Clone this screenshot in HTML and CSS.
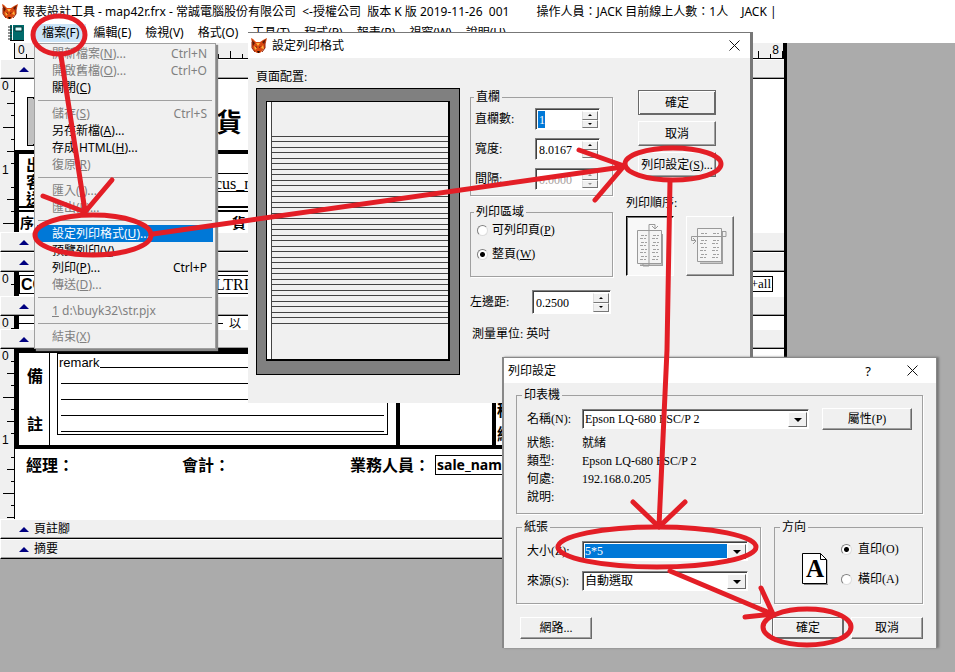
FILE: index.html
```html
<!DOCTYPE html>
<html lang="zh-Hant">
<head>
<meta charset="utf-8">
<title>報表設計工具</title>
<link rel="stylesheet" href="styles.css">
</head>
<body>
<svg class="defs" aria-hidden="true">
  <symbol id="fox" viewBox="0 0 16 16">
    <path d="M0 0l2 1 3 3h4l3-2 4-2-1 4-1 2 0 4-3 3-2 2H6l-3-2-2-4 0-4z" fill="#d9480f"/>
    <path d="M1 2l3 3-2 3zM15 1l-4 3 2 2z" fill="#5c1a08"/>
    <path d="M5 5h4l-2 3zM3 8l3 2-2 2zM12 7l-2 3 3 1z" fill="#ffb340"/>
    <path d="M4 8l2 1v1zM10 8l-2 1v1zM6 13h3l-1 2H7z" fill="#2b0d05"/>
    <path d="M1 4v6l3 4M14 4v6l-3 4" fill="none" stroke="#8d2108"/>
  </symbol>
  <symbol id="sheet" viewBox="0 0 26 36">
    <path d="M3 35.500h22.500V4" fill="none" stroke="#a0a0a0" stroke-width="2"/>
    <path d="M.5.500h24v33H.5z" fill="#f4f4f4" stroke="#999"/>
    <path d="M4 5.500h6M4 12.500h6M4 19.500h6M4 26.500h6M16 5.500h6M16 12.500h6M16 19.500h6M16 26.500h6M3 8.500h6M3 15.500h6M3 22.500h6M3 29.500h6M15 8.500h6M15 15.500h6M15 22.500h6M15 29.500h6" stroke="#a0a0a0" stroke-dasharray="3 1"/>
  </symbol>
</svg>

<header class="app-head">
  <div class="app-title">
    <svg class="fox"><use href="#fox"/></svg>
    <span>報表設計工具 - map42r.frx - 常誠電腦股份有限公司&nbsp; &lt;-授權公司&nbsp; 版本 K 版 2019-11-26&nbsp; 001</span>
    <span class="operator">操作人員：JACK 目前線上人數：1人</span>
    <span class="user">JACK |</span>
  </div>
  <nav class="menubar">
    <svg class="book" viewBox="0 0 16 16"><path d="M2 0h14v15H2z" fill="#006b6b"/><path d="M4 0h1v15H4z" fill="#fff"/><path d="M7 2h7v4H7z" fill="#dff" stroke="#033"/><path d="M0 2h4M0 5h4M0 8h4M0 11h4M0 14h4" stroke="#222"/><path d="M2 15.500h14" stroke="#000"/></svg>
    <button class="open">檔案(F)</button><button>編輯(E)</button><button>檢視(V)</button><button>格式(O)</button><button>工具(T)</button><button>程式(P)</button><button>報表(R)</button><button>視窗(W)</button><button>說明(H)</button>
  </nav>
</header>

<main class="designer">
  <div class="ruler-top"><span>0</span><span>8</span></div>
  <div class="band"><i></i></div>
  <section class="strip">
    <div class="ruler"><b>0</b><b>1</b></div>
    <div class="canvas tall">
      <div class="picture"></div>
      <span class="ink headline">貨</span>
      <div class="frame head-frame"></div>
      <span class="ink t-out">出</span><span class="ink t-cust">客</span><span class="ink t-send">送</span>
      <div class="rule r1"></div><span class="ink serif t-cus">cus_n</span><div class="rule r2"></div><div class="rule r3"></div><div class="rule r4"></div>
      <span class="ink small t-seq">序</span><span class="ink small t-goods">貨</span>
    </div>
  </section>
  <div class="band"><i></i></div>
  <div class="band"><i></i></div>
  <section class="strip">
    <div class="ruler"><b>0</b></div>
    <div class="canvas detail">
      <div class="frame side-frame"></div>
      <span class="field t-co">CO</span><span class="field serif t-ltri">LTRI</span><span class="field serif t-all">+all</span>
    </div>
  </section>
  <div class="band"><i></i></div>
  <section class="strip">
    <div class="ruler"><b>0</b></div>
    <div class="canvas thin">
      <div class="frame side-frame"></div><div class="rule r5"></div><span class="ink below">以</span>
    </div>
  </section>
  <div class="band"><i></i></div>
  <section class="strip">
    <div class="ruler"><b>0</b><b>1</b></div>
    <div class="canvas foot">
      <div class="frame foot-frame"></div>
      <span class="ink t-bei">備</span><span class="ink t-zhu">註</span>
      <div class="remark"><span>remark</span><hr><hr><hr><hr><hr></div>
      <div class="post p0"></div><div class="post p1"></div><div class="post p2"></div>
      <span class="ink t-tax">稅</span><span class="ink t-total">總</span>
      <span class="ink sign s1">經理：</span><span class="ink sign s2">會計：</span><span class="ink sign s3">業務人員：</span>
      <span class="field sale">sale_name</span>
    </div>
  </section>
  <div class="band"><i></i>頁註腳</div>
  <div class="band"><i></i>摘要</div>
</main>

<div class="menu" role="menu">
  <button disabled><span>開新檔案(<u>N</u>)...</span><span>Ctrl+N</span></button>
  <button disabled><span>開啟舊檔(<u>O</u>)...</span><span>Ctrl+O</span></button>
  <button><span>關閉(<u>C</u>)</span></button>
  <hr>
  <button disabled><span>儲存(<u>S</u>)</span><span>Ctrl+S</span></button>
  <button><span>另存新檔(<u>A</u>)...</span></button>
  <button><span>存成 HTML(<u>H</u>)...</span></button>
  <button disabled><span>復原(<u>R</u>)</span></button>
  <hr>
  <button disabled><span>匯入(<u>I</u>)...</span></button>
  <button disabled><span>匯出(<u>E</u>)...</span></button>
  <hr>
  <button class="active"><span>設定列印格式(<u>U</u>)...</span></button>
  <button><span>預覽列印(<u>V</u>)</span></button>
  <button><span>列印(<u>P</u>)...</span><span>Ctrl+P</span></button>
  <button disabled><span>傳送(<u>D</u>)...</span></button>
  <hr>
  <button disabled><span><u>1</u> d:\buyk32\str.pjx</span></button>
  <hr>
  <button disabled><span>結束(<u>X</u>)</span></button>
</div>

<div class="dialog page-setup" role="dialog">
  <div class="dialog-title">
    <svg class="fox"><use href="#fox"/></svg><span>設定列印格式</span>
    <button class="close" aria-label="關閉"><svg viewBox="0 0 11 11"><path d="M.5.500l10 10M10.500.500l-10 10"/></svg></button>
  </div>
  <div class="setup-body">
    <div class="preview-col">
      <div>頁面配置:</div>
      <div class="preview"><div class="paper"><div class="lines"></div></div></div>
    </div>
    <div class="options-col">
      <fieldset class="columns">
        <legend>直欄</legend>
        <div class="row"><label for="cols">直欄數:</label><span class="spin"><input id="cols" class="picked" value="1"><span class="arrows"><button aria-label="增加"></button><button aria-label="減少"></button></span></span></div>
        <div class="row"><label for="width">寬度:</label><span class="spin"><input id="width" value="8.0167"><span class="arrows"><button aria-label="增加"></button><button aria-label="減少"></button></span></span></div>
        <div class="row"><label for="gap">間隔:</label><span class="spin off"><input id="gap" value="0.0000" disabled><span class="arrows"><button aria-label="增加" disabled></button><button aria-label="減少" disabled></button></span></span></div>
      </fieldset>
      <fieldset class="area">
        <legend>列印區域</legend>
        <label><input type="radio" name="area"><span>可列印頁(<u>P</u>)</span></label>
        <label><input type="radio" name="area" checked><span>整頁(<u>W</u>)</span></label>
      </fieldset>
      <div class="margin-row"><label for="left">左邊距:</label><span class="spin wide"><input id="left" value="0.2500"><span class="arrows"><button aria-label="增加"></button><button aria-label="減少"></button></span></span></div>
      <div class="unit">測量單位: 英吋</div>
    </div>
    <div class="actions-col">
      <button class="btn default">確定</button>
      <button class="btn">取消</button>
      <button class="btn">列印設定(<u>S</u>)...</button>
      <div class="order-label">列印順序:</div>
      <div class="orders">
        <button class="order pressed" aria-label="由上而下"><svg viewBox="0 0 40 46"><use href="#sheet" x="7" y="7" width="26" height="36"/><path d="M13 40v3h6V1.500h6v4M22 3l3 3 3-3" fill="none" stroke="#999"/></svg></button>
        <button class="order" aria-label="由左而右"><svg viewBox="0 0 40 46"><use href="#sheet" x="7" y="5" width="26" height="36"/><path d="M32 8.500h4v5H1.500v4h4M3 15l3 3-3 3" fill="none" stroke="#999"/></svg></button>
      </div>
    </div>
  </div>
</div>

<div class="dialog print-setup" role="dialog">
  <div class="dialog-title">
    <span>列印設定</span>
    <button class="help">?</button>
    <button class="close" aria-label="關閉"><svg viewBox="0 0 11 11"><path d="M.5.500l10 10M10.500.500l-10 10"/></svg></button>
  </div>
  <div class="print-body">
    <fieldset class="printer">
      <legend>印表機</legend>
      <div class="name-row"><label for="printer">名稱(N):</label><span class="combo"><select id="printer"><option>Epson LQ-680 ESC/P 2</option></select></span><button class="btn">屬性(P)</button></div>
      <dl><dt>狀態:</dt><dd>就緒</dd><dt>類型:</dt><dd>Epson LQ-680 ESC/P 2</dd><dt>何處:</dt><dd>192.168.0.205</dd><dt>說明:</dt><dd></dd></dl>
    </fieldset>
    <div class="paper-row">
      <fieldset class="paper-set">
        <legend>紙張</legend>
        <div class="name-row"><label for="size">大小(Z):</label><span class="combo chosen"><select id="size"><option>5*5</option></select></span></div>
        <div class="name-row"><label for="source">來源(S):</label><span class="combo"><select id="source"><option>自動選取</option></select></span></div>
      </fieldset>
      <fieldset class="orient">
        <legend>方向</legend>
        <svg class="portrait" viewBox="0 0 26 32"><path d="M2 31.500h24V7" fill="none" stroke="#888"/><path d="M.5.500h18l6 6v24H.5z" fill="#fff" stroke="#000"/><path d="M18.500.500v6h6" fill="none" stroke="#000"/><text x="13" y="24" text-anchor="middle">A</text></svg>
        <div class="ways">
          <label><input type="radio" name="way" checked>直印(O)</label>
          <label><input type="radio" name="way">橫印(A)</label>
        </div>
      </fieldset>
    </div>
    <div class="buttons"><button class="btn">網路...</button><button class="btn default">確定</button><button class="btn">取消</button></div>
  </div>
</div>

<svg class="marks" viewBox="0 0 955 672" aria-hidden="true">
  <ellipse cx="59" cy="35" rx="26" ry="19"/>
  <path d="M61 56L85 211M43 196L85 212L112 180"/>
  <ellipse cx="93" cy="235" rx="58" ry="20"/>
  <path d="M153 234L622 167M579 150L624 166L595 200"/>
  <ellipse cx="673" cy="164" rx="48" ry="16"/>
  <path d="M670 181L667 350L659 526M633 502L659 527L685 502"/>
  <ellipse cx="657" cy="547" rx="99" ry="20"/>
  <path d="M670 571L772 614M761 588L773 614L745 617"/>
  <ellipse cx="807" cy="627" rx="44" ry="18"/>
</svg>
</body>
</html>
```

FILE: styles.css
```css
* { box-sizing: border-box; }

body {
  margin: 0;
  min-height: 100vh;
  overflow: hidden;
  position: relative;
  background: #ababab;
  color: #000;
  font: 12px/16px "Liberation Serif", "Noto Sans CJK TC", serif;
}

button, input, select { font: inherit; color: inherit; margin: 0; padding: 0; border: 0; border-radius: 0; background: none; }
button { white-space: nowrap; }
fieldset { margin: 0; padding: 0; min-width: 0; }
.defs { position: absolute; width: 0; height: 0; }
.fox { width: 16px; height: 16px; flex: none; }

/* Application header */
.app-head { background: #fff; height: 43px; font-family: "Noto Sans", "Noto Sans CJK TC", sans-serif; }
.app-title { display: flex; align-items: center; height: 24px; padding-left: 2px; gap: 5px; white-space: nowrap; }
.operator { margin-left: 22px; }
.user { margin-left: 8px; }
.menubar { display: flex; align-items: center; height: 18px; padding-left: 8px; }
.menubar .book { width: 16px; height: 16px; margin-right: 11px; }
.menubar button { height: 18px; padding: 0 7px; line-height: 18px; }
.menubar .open { background: #cce4f7; }

/* Report designer */
.designer { width: calc(100% - 168px); border-right: 3px solid #000; background: #fff; }
.ruler-top {
  display: flex; justify-content: space-between; align-items: flex-start;
  height: 16px; margin-left: 14px; padding: 0 4px 0 3px;
  border-left: 1px solid #000; border-bottom: 1px solid #000; border-right: 1px solid #000;
  background:
    repeating-linear-gradient(90deg, transparent 0 11px, #000 11px 12px) 0 100% / 100% 4px no-repeat,
    repeating-linear-gradient(90deg, transparent 0 23px, #000 23px 24px) 0 100% / 100% 7px no-repeat,
    #f0f0f0;
  font: 12px/15px "Liberation Sans", sans-serif;
}
.band {
  display: flex; align-items: center; gap: 5px;
  height: 20px; padding-left: 18px;
  background: #f0f0f0;
  border-left: 1px solid #fff; border-top: 1px solid #fff; border-bottom: 1px solid #000;
  box-shadow: inset 0 -1px #a0a0a0;
  line-height: 14px;
}
.band i { border: 5px solid transparent; border-top: 0; border-bottom: 5px solid #000080; margin-top: 1px; }
.strip { display: grid; grid-template-columns: 15px 1fr; }
.ruler {
  overflow: hidden; height: 0; min-height: 100%;
  border-right: 1px solid #000;
  background:
    repeating-linear-gradient(transparent 0 12px, #000 12px 13px, transparent 13px 24px) 100% 0 / 3px 100% no-repeat,
    repeating-linear-gradient(transparent 0 24px, #000 24px 25px, transparent 25px 48px) 100% 0 / 7px 100% no-repeat,
    repeating-linear-gradient(transparent 0 48px, #000 48px 49px, transparent 49px 96px) 100% 0 / 11px 100% no-repeat,
    #f0f0f0;
}
.ruler b { display: block; height: 84px; padding-left: 2px; font: 12px/14px "Liberation Sans", sans-serif; }
.canvas { position: relative; overflow: hidden; background: #fff; }
.tall { height: 153px; }
.detail { height: 24px; }
.thin { height: 13px; }
.foot { height: 170px; }
.ink, .field, .rule, .frame, .post, .picture, .remark { position: absolute; white-space: nowrap; }
.ink { font: bold 16px/16px "Noto Sans CJK TC", sans-serif; }
.serif, .ink.serif { font: 16px/18px "Liberation Serif", serif; }
.rule { height: 1px; background: #000; }
.picture {
  left: 12px; top: 18px; width: 60px; height: 49px; border: 1px solid #000;
  background: linear-gradient(45deg, transparent 49%, #000 49% 51%, transparent 51%), linear-gradient(135deg, #c0c0c0 49%, #000 49% 51%, #c0c0c0 51%);
}
.ink.headline { left: 201px; top: 24px; font-size: 26px; line-height: 36px; }
.frame { border: 4px solid #000; left: 0; right: 42px; }
.head-frame { top: 71px; bottom: 0; border-bottom: 0; }
.side-frame { top: 0; bottom: 0; border-width: 0 4px; }
.foot-frame { top: 0; height: 100px; }
.t-out { left: 11px; top: 77px; }
.t-cust { left: 11px; top: 94px; }
.t-send { left: 11px; top: 111px; }
.r1 { top: 94px; left: 190px; width: 100px; }
.ink.t-cus { left: 200px; top: 96px; }
.r2 { top: 112px; left: 190px; width: 100px; }
.r3 { top: 127px; left: 4px; width: 300px; height: 2px; }
.r4 { top: 131px; left: 4px; width: 300px; height: 2px; }
.ink.small { font-size: 14px; line-height: 16px; }
.t-seq { left: 5px; top: 135px; }
.t-goods { left: 217px; top: 135px; }
.field { border: 1px solid #000; padding: 0 1px; }
.field.t-co { left: 4px; top: 3px; width: 60px; font: bold 16px/17px "Liberation Sans", sans-serif; }
.field.t-ltri { left: 100px; top: 3px; width: 160px; padding-left: 99px; line-height: 17px; }
.field.t-all { left: 720px; top: 4px; width: 38px; font-size: 13px; line-height: 14px; text-align: right; }
.r5 { top: 7px; left: 4px; width: 204px; }
.ink.below { left: 214px; top: 0; font-size: 12px; font-weight: 400; line-height: 13px; }
.t-bei { left: 12px; top: 18px; }
.t-zhu { left: 12px; top: 66px; }
.remark { left: 42px; top: 4px; width: 331px; height: 82px; border: 1px solid #000; padding: 13px 3px 0; font: 13px/16px "Liberation Sans", sans-serif; }
.remark span { position: absolute; left: 0; top: 1px; padding: 0 1px; background: #fff; }
.remark hr { margin: 0 0 15px; border: 0; height: 1px; background: #000; }
.post { top: 0; height: 96px; width: 4px; background: #000; }
.p0 { left: 34px; width: 1px; }
.p1 { left: 381px; }
.p2 { left: 477px; }
.t-tax { left: 482px; top: 52px; }
.t-total { left: 482px; top: 76px; }
.sign { top: 107px; }
.s1 { left: 11px; }
.s2 { left: 167px; }
.s3 { left: 335px; }
.field.sale { left: 420px; top: 106px; width: 90px; font: bold 14px/18px "Noto Sans", sans-serif; }

/* File menu */
.menu {
  position: absolute; left: 34px; top: 43px; width: 182px; padding: 1px 2px 3px;
  background: #f0f0f0; border: 1px solid #a0a0a0; box-shadow: 2px 2px 1px #888;
  font-family: "Noto Sans", "Noto Sans CJK TC", sans-serif;
}
.menu button { display: flex; justify-content: space-between; width: 100%; height: 17px; padding: 0 6px 0 15px; line-height: 17px; }
.menu button:disabled { color: #808080; }
.menu .active { background: #0078d7; color: #fff; }
.menu hr { height: 1px; margin: 4px 1px; border: 0; background: #a0a0a0; }

/* Dialogs */
.dialog { position: absolute; background: #f0f0f0; }
.dialog-title { display: flex; align-items: center; height: 25px; background: #fff; font-family: "Noto Sans", "Noto Sans CJK TC", sans-serif; }
.dialog-title .close { margin-left: auto; width: 11px; height: 11px; }
.close svg { display: block; width: 11px; height: 11px; fill: none; stroke: #111; }
.page-setup { left: 248px; top: 32px; width: 505px; height: 371px; border-top: 1px solid #777; border-right: 3px solid #777; }
.page-setup .dialog-title { padding: 0 10px 0 3px; gap: 5px; }
.setup-body { display: grid; grid-template-columns: 204px 143px 1fr; gap: 10px; padding: 11px 12px 0 8px; }
.preview { height: 287px; margin-top: 3px; padding: 12px 9px 13px; border: 1px solid #000; background: #808080; }
.paper { height: 260px; border: 1px solid #000; border-right-width: 2px; border-bottom-width: 2px; padding-left: 4px; background: #fff; }
.lines { height: 100%; padding-top: 34px; border-left: 1px solid #444; background: #f0f0f0; }
.lines::before { content: ""; display: block; height: 188px; background: repeating-linear-gradient(#444 0 1px, transparent 1px 5px, #444 5px 6px, transparent 6px 11px); }
fieldset { border: 1px solid #a0a0a0; box-shadow: 1px 1px #fff; }
legend { padding: 0 2px; line-height: 16px; }
.options-col { padding-top: 20px; }
.columns { height: 107px; padding: 3px 12px 0 4px; }
.columns legend { margin-left: -1px; }
.row { display: flex; justify-content: space-between; align-items: center; height: 22px; margin-bottom: 8px; }
.spin, .combo { display: flex; background: #fff; border: 1px solid; border-color: #808080 #fff #fff #808080; box-shadow: inset 1px 1px #404040; }
.spin { width: 65px; height: 22px; padding: 2px 1px 1px 2px; }
.spin.wide { width: 79px; height: 24px; }
.spin input { flex: 1; width: 0; min-width: 0; padding-left: 1px; }
.spin .picked { flex: none; width: 7px; margin-right: auto; background: #0078d7; color: #fff; }
.spin.off input { color: #a9a0a0; }
.arrows { display: flex; flex-direction: column; width: 16px; }
.arrows button { flex: 1; display: flex; align-items: center; justify-content: center; background: #f0f0f0; border: 1px solid; border-color: #fff #777 #777 #ddd; }
.arrows button::before { content: ""; border: 2px solid transparent; border-top: 0; border-bottom: 2px solid #000; }
.arrows button + button::before { transform: rotate(180deg); }
.arrows button:disabled::before { opacity: .4; }
.area { height: 73px; margin-top: 8px; padding: 2px 6px 0; display: grid; align-content: start; gap: 8px; }
.area legend { margin-left: -3px; }
.area label, .ways label { display: flex; align-items: center; gap: 4px; line-height: 16px; }
input[type=radio] { appearance: none; width: 11px; height: 11px; border: 1px solid; border-color: #808080 #ddd #ddd #808080; border-radius: 50%; background: #fff; }
input[type=radio]:checked { background: radial-gradient(#000 0 2px, #fff 3px); }
.margin-row { display: flex; justify-content: space-between; align-items: center; width: 141px; margin-top: 13px; }
.unit { margin: 12px 0 0 2px; }
.btn { height: 25px; background: #f0f0f0; border: 1px solid; border-color: #fff #696969 #696969 #fff; box-shadow: inset -1px -1px #a0a0a0; text-align: center; }
.btn.default { border-color: #696969; box-shadow: inset 1px 1px #fff, inset -1px -1px #696969; }
.actions-col { display: flex; flex-direction: column; padding: 21px 0 0 3px; }
.actions-col .btn { width: 78px; margin: 0 0 6px 12px; }
.order-label { margin: 12px 0 5px; }
.orders { display: flex; gap: 12px; }
.order { width: 48px; height: 60px; display: grid; place-items: center; border: 1px solid; border-color: #fff #696969 #696969 #fff; box-shadow: inset -1px -1px #a0a0a0; }
.order svg { width: 40px; height: 46px; }
.order.pressed { background: #f8f8f8; border-color: #000 #fff #fff #000; box-shadow: inset 1px 1px #777; }

.print-setup { left: 502px; top: 357px; width: 435px; height: 291px; border: 1px solid #888; border-width: 1px 1px 0 2px; box-shadow: 2px 0 2px #777; }
.print-setup .dialog-title { padding: 0 18px 0 4px; }
.print-setup .help { margin-left: auto; margin-right: 36px; font-size: 13px; }
.print-setup .close { margin-left: 0; }
.print-body { padding: 4px 13px 0 12px; }
.printer { height: 127px; padding: 5px 10px 0; }
.printer legend, .paper-set legend { margin-left: -5px; }
.name-row { display: flex; align-items: center; height: 22px; }
.name-row label { width: 55px; }
.combo { position: relative; height: 20px; width: 166px; padding: 2px; }
.printer .combo { width: 227px; margin-right: 13px; }
.combo::after { content: ""; position: absolute; right: 6px; top: 8px; border: 4px solid transparent; border-top: 4px solid #000; border-bottom: 0; pointer-events: none; }
.combo::before { content: ""; position: absolute; right: 1px; top: 2px; bottom: 1px; width: 17px; background: #f0f0f0; border: 1px solid; border-color: #fff #696969 #696969 #fff; pointer-events: none; }
.combo select { appearance: none; flex: 1; line-height: 15px; outline: 0; }
.chosen select { background: #0078d7; color: #fff; }
.printer .btn { flex: 1; height: 22px; }
dl { display: grid; grid-template-columns: 55px 1fr; margin: 4px 0 0; line-height: 18px; }
dd { margin: 0; }
.paper-row { display: grid; grid-template-columns: 245px 1fr; gap: 13px; margin-top: 5px; }
.paper-set { height: 85px; padding: 5px 10px 0; }
.paper-set .name-row { margin-bottom: 8px; }
.orient { display: flex; padding: 6px 10px 0 27px; gap: 13px; }
.orient legend { margin-left: -22px; }
.portrait { width: 26px; height: 32px; margin-top: 12px; }
.portrait text { font: bold 25px "Liberation Serif", serif; }
.ways { display: grid; align-content: start; gap: 14px; }
.ways label { gap: 6px; }
.buttons { display: flex; gap: 7px; padding: 13px 0 0 4px; }
.buttons .btn { width: 72px; height: 22px; }
.buttons .default { margin-left: auto; }

/* Hand-drawn guidance */
.marks { position: absolute; left: 0; top: 0; width: 955px; height: 672px; pointer-events: none; fill: none; stroke: #e31e26; stroke-width: 5; stroke-linecap: round; stroke-linejoin: round; }
```
